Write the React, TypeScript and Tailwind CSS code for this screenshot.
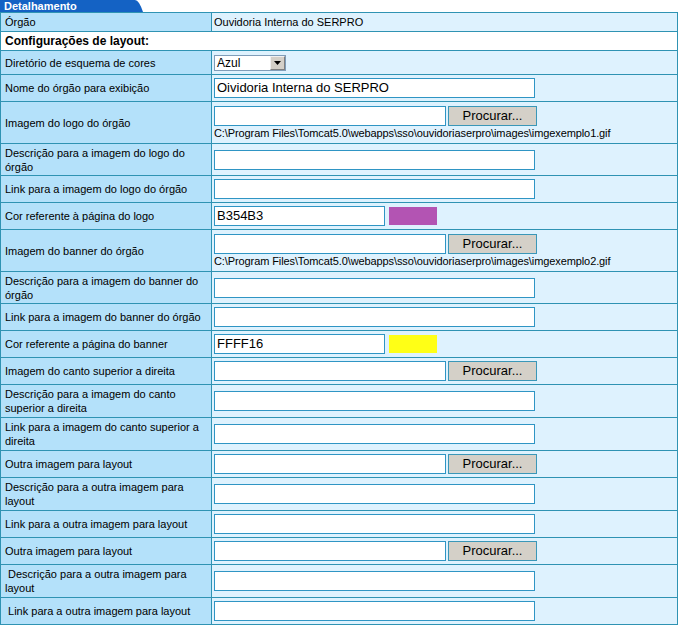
import React from "react";

type Row = {
  label: string;
  h: string;
  kind: "text" | "file" | "color" | "select" | "plain";
  value?: string;
  path?: string;
  swatch?: string;
};

const rows: Row[] = [
  { label: "Diretório de esquema de cores", h: "h-[24px]", kind: "select" },
  { label: "Nome do órgão para exibição", h: "h-[27px]", kind: "text", value: "Oividoria Interna do SERPRO" },
  {
    label: "Imagem do logo do órgão",
    h: "h-[42px]",
    kind: "file",
    path: "C:\\Program Files\\Tomcat5.0\\webapps\\sso\\ouvidoriaserpro\\images\\imgexemplo1.gif",
  },
  { label: "Descrição para a imagem do logo do órgão", h: "h-[32px]", kind: "text" },
  { label: "Link para a imagem do logo do órgão", h: "h-[27px]", kind: "text" },
  { label: "Cor referente à página do logo", h: "h-[27px]", kind: "color", value: "B354B3", swatch: "bg-[#b354b3]" },
  {
    label: "Imagem do banner do órgão",
    h: "h-[42px]",
    kind: "file",
    path: "C:\\Program Files\\Tomcat5.0\\webapps\\sso\\ouvidoriaserpro\\images\\imgexemplo2.gif",
  },
  { label: "Descrição para a imagem do banner do órgão", h: "h-[32px]", kind: "text" },
  { label: "Link para a imagem do banner do órgão", h: "h-[27px]", kind: "text" },
  { label: "Cor referente a página do banner", h: "h-[27px]", kind: "color", value: "FFFF16", swatch: "bg-[#ffff16]" },
  { label: "Imagem do canto superior a direita", h: "h-[27px]", kind: "file" },
  { label: "Descrição para a imagem do canto superior a direita", h: "h-[33px]", kind: "text" },
  { label: "Link para a imagem do canto superior a direita", h: "h-[33px]", kind: "text" },
  { label: "Outra imagem para layout", h: "h-[27px]", kind: "file" },
  { label: "Descrição para a outra imagem para layout", h: "h-[33px]", kind: "text" },
  { label: "Link para a outra imagem para layout", h: "h-[27px]", kind: "text" },
  { label: "Outra imagem para layout", h: "h-[27px]", kind: "file" },
  { label: " Descrição para a outra imagem para layout", h: "h-[33px]", kind: "text" },
  { label: " Link para a outra imagem para layout", h: "h-[27px]", kind: "text" },
];

const inputBox = "h-[20px] bg-white border border-[#2f95c4] px-[2px] text-[13px] leading-[18px] text-black";

function Browse() {
  return (
    <div className="w-[89px] h-[20px] bg-[#d4d0c8] border border-[#3a97b8] text-[13px] leading-[18px] text-black text-center">
      Procurar...
    </div>
  );
}

function Value({ row }: { row: Row }) {
  if (row.kind === "select") {
    return (
      <div className="flex items-center h-[16px] w-[72px] bg-white border border-[#7f9db9] text-[12px] leading-[14px]">
        <span className="flex-1 pl-[2px]">Azul</span>
        <span className="w-[15px] h-[14px] bg-[#d4d0c8] border border-[#f0f0f0] border-r-[#808080] border-b-[#808080] flex items-center justify-center">
          <svg width="7" height="4" viewBox="0 0 7 4">
            <path d="M0 0 H7 L3.5 4 Z" fill="#000" />
          </svg>
        </span>
      </div>
    );
  }
  if (row.kind === "file") {
    return (
      <div className="flex flex-col">
        <div className="flex gap-[2px]">
          <div className={`${inputBox} w-[232px]`} />
          <Browse />
        </div>
        {row.path && (
          <div className="text-[11px] leading-[13px] mt-[1px] tracking-[-0.1px] text-black whitespace-nowrap">{row.path}</div>
        )}
      </div>
    );
  }
  if (row.kind === "color") {
    return (
      <div className="flex items-center gap-[4px]">
        <div className={`${inputBox} w-[171px]`}>{row.value}</div>
        <div className={`w-[48px] h-[18px] ${row.swatch}`} />
      </div>
    );
  }
  return <div className={`${inputBox} w-[321px]`}>{row.value}</div>;
}

export default function App() {
  return (
    <div className="w-[680px] h-[626px] bg-white font-['Liberation_Sans',Arial,sans-serif] text-black">
      <div className="flex h-[12px]">
        <div className="w-[128px] bg-[#1462c4] text-white font-bold text-[11px] leading-[12px] pl-[4px]">Detalhamento</div>
        <svg width="16" height="12" viewBox="0 0 16 12">
          <path d="M0 0 H7 Q11 0 15 12 H0 Z" fill="#1462c4" />
        </svg>
      </div>
      <div className="w-[678px] border border-[#2f93b3] border-b-0">
        <div className="grid grid-cols-[211px_1fr] h-[19px] border-b border-[#2f93b3] text-[11px] leading-[18px]">
          <div className="bg-[#b4e1fa] border-r border-[#2f93b3] pl-[4px]">Órgão</div>
          <div className="bg-[#def2fe] pl-[2px]">Ouvidoria Interna do SERPRO</div>
        </div>
        <div className="h-[19px] bg-white border-b border-[#2f93b3] pl-[4px] font-bold text-[12px] leading-[18px]">
          Configurações de layout:
        </div>
        {rows.map((row, i) => (
          <div key={i} className={`grid grid-cols-[211px_1fr] ${row.h} border-b border-[#2f93b3]`}>
            <div className="bg-[#b4e1fa] border-r border-[#2f93b3] pl-[4px] pr-[4px] flex items-center text-[11px] leading-[14px] whitespace-pre-wrap">
              {row.label}
            </div>
            <div className="bg-[#def2fe] pl-[2px] flex items-center">
              <Value row={row} />
            </div>
          </div>
        ))}
      </div>
    </div>
  );
}
